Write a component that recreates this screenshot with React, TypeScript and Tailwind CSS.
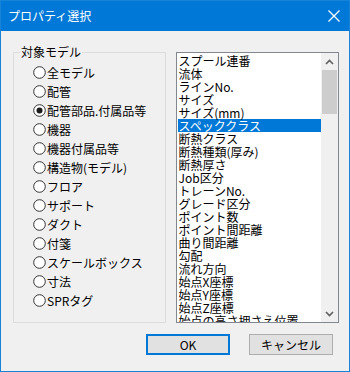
const models = [
  '全モデル',
  '配管',
  '配管部品.付属品等',
  '機器',
  '機器付属品等',
  '構造物(モデル)',
  'フロア',
  'サポート',
  'ダクト',
  '付箋',
  'スケールボックス',
  '寸法',
  'SPRタグ',
];

const props = [
  'スプール連番',
  '流体',
  'ラインNo.',
  'サイズ',
  'サイズ(mm)',
  'スペッククラス',
  '断熱クラス',
  '断熱種類(厚み)',
  '断熱厚さ',
  'Job区分',
  'トレーンNo.',
  'グレード区分',
  'ポイント数',
  'ポイント間距離',
  '曲り間距離',
  '勾配',
  '流れ方向',
  '始点X座標',
  '始点Y座標',
  '始点Z座標',
  '始点の高さ押さえ位置',
];

function Radio({ checked }: { checked: boolean }) {
  return (
    <svg width="13" height="13" viewBox="0 0 13 13" className="shrink-0">
      <circle cx="6.5" cy="6.5" r="5.8" fill="#fff" stroke="#333" strokeWidth="1" />
      {checked && <circle cx="6.5" cy="6.5" r="3" fill="#1a1a1a" />}
    </svg>
  );
}

export default function App() {
  const selected = 2;
  const selProp = 5;

  return (
    <div
      className="w-[350px] h-[372px] bg-[#f0f0f0] border border-[#1883d7] flex flex-col text-black overflow-hidden"
      style={{ fontFamily: '"Noto Sans CJK JP", "Liberation Sans", sans-serif' }}
    >
      {/* タイトルバー */}
      <div className="h-[30px] bg-[#0078d7] flex items-center justify-between pl-[7px] pr-[8px] shrink-0">
        <span className="text-white text-[12px] leading-none">プロパティ選択</span>
        <svg width="14" height="14" viewBox="0 0 14 14">
          <path d="M1.5 1.5 L12.5 12.5 M12.5 1.5 L1.5 12.5" stroke="#fff" strokeWidth="1.3" />
        </svg>
      </div>

      <div className="flex flex-col pl-[12px] pr-[10px] pt-[21px]">
        <div className="flex gap-[10px]">
          {/* 対象モデル */}
          <div className="relative w-[153px] h-[271px] border border-[#dcdcdc] pl-[19px] pt-[10px]">
            <span className="absolute left-[6px] top-[-8px] bg-[#f0f0f0] px-[1px] text-[12px] leading-[14px]">
              対象モデル
            </span>
            {models.map((m, i) => (
              <div key={m} className="h-[19px] flex items-center gap-[1px]">
                <Radio checked={i === selected} />
                <span className="text-[12px] leading-none whitespace-nowrap">{m}</span>
              </div>
            ))}
          </div>

          {/* プロパティ一覧 */}
          <div className="w-[164px] h-[271px] border border-[#828790] bg-white flex">
            <div className="flex-1 overflow-hidden pt-[1px] pl-[1px]">
              {props.map((p, i) => (
                <div
                  key={p}
                  className={
                    'h-[13px] text-[12px] leading-[13px] whitespace-nowrap pl-[1px] ' +
                    (i === selProp ? 'bg-[#0078d7] text-white' : '')
                  }
                >
                  {p}
                </div>
              ))}
            </div>
            <div className="w-[17px] bg-[#f0f0f0] flex flex-col shrink-0">
              <div className="h-[17px] flex items-center justify-center">
                <svg width="9" height="6" viewBox="0 0 9 6">
                  <path d="M1 5 L4.5 1.5 L8 5" fill="none" stroke="#606060" strokeWidth="1.6" />
                </svg>
              </div>
              <div className="mx-[1px] h-[44px] bg-[#cdcdcd]" />
              <div className="flex-1" />
              <div className="h-[17px] flex items-center justify-center">
                <svg width="9" height="6" viewBox="0 0 9 6">
                  <path d="M1 1 L4.5 4.5 L8 1" fill="none" stroke="#606060" strokeWidth="1.6" />
                </svg>
              </div>
            </div>
          </div>
        </div>

        {/* ボタン */}
        <div className="flex justify-end gap-[19px] mt-[11px] pr-[6px]">
          <button className="w-[84px] h-[21px] bg-[#e1e1e1] border-2 border-[#0078d7] text-[12px] leading-none flex items-center justify-center">
            OK
          </button>
          <button className="w-[84px] h-[21px] bg-[#e1e1e1] border border-[#adadad] text-[12px] leading-none flex items-center justify-center">
            キャンセル
          </button>
        </div>
      </div>
    </div>
  );
}
